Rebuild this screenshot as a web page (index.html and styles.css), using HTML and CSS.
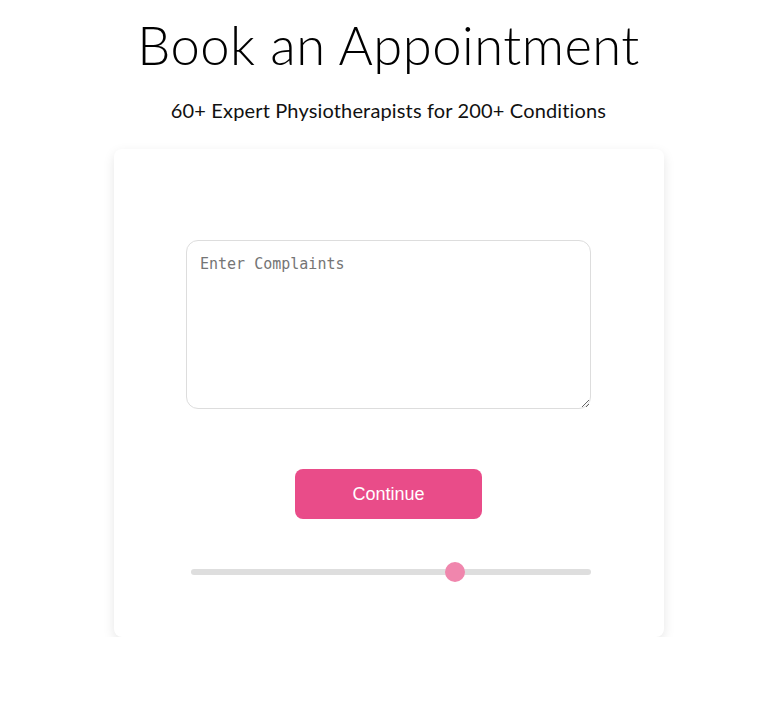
FILE: index.html
```html
<!DOCTYPE html>
<html>
<head>
<meta charset="utf-8">
<link rel="stylesheet" href="styles.css">
</head>
<body>
<div class="page">
  <h1 class="title">Book an Appointment</h1>
  <p class="subtitle">60+ Expert Physiotherapists for 200+ Conditions</p>
  <div class="card">
    <textarea class="complaints" placeholder="Enter Complaints"></textarea>
    <button class="continue">Continue</button>
    <div class="slider">
      <div class="track"></div>
      <div class="thumb" style="left: 66%"></div>
    </div>
  </div>
</div>
</body>
</html>
```

FILE: styles.css
```css
html, body {
  margin: 0;
  padding: 0;
  background: #fff;
}
.page {
  padding-left: 12px;
  display: flex;
  flex-direction: column;
  align-items: center;
  font-family: "Lato", "Liberation Sans", sans-serif;
  color: #000;
}
.title {
  margin: 13px 0 0;
  font-size: 52.5px;
  font-weight: 300;
  line-height: 64px;
  letter-spacing: 0.5px;
}
.subtitle {
  margin: 20px 0 0;
  font-size: 20px;
  font-weight: 400;
  line-height: 26px;
  letter-spacing: 0.15px;
  color: #111;
}
.card {
  margin-top: 26px;
  width: 550px;
  height: 488px;
  box-sizing: border-box;
  background: #fff;
  border-radius: 8px;
  box-shadow: 0 4px 12px rgba(0, 0, 0, 0.1);
  display: flex;
  flex-direction: column;
  align-items: center;
  padding-top: 91px;
}
.complaints {
  width: 405px;
  height: 169px;
  box-sizing: border-box;
  border: 1px solid #ddd;
  border-radius: 12px;
  padding: 13px;
  font-family: "DejaVu Sans Mono", monospace;
  font-size: 15px;
  line-height: 20px;
  resize: vertical;
  outline: none;
}
.complaints::placeholder {
  color: #757575;
}
.continue {
  margin-top: 60px;
  width: 187px;
  height: 50px;
  border: none;
  border-radius: 8px;
  background: #e94c89;
  color: #fff;
  font-family: "Liberation Sans", Arial, sans-serif;
  font-size: 18px;
}
.slider {
  position: relative;
  margin-top: 43px;
  margin-left: 5px;
  width: 400px;
  height: 20px;
}
.track {
  position: absolute;
  left: 0;
  right: 0;
  top: 7px;
  height: 6px;
  border-radius: 3px;
  background: #dedede;
}
.thumb {
  position: absolute;
  top: 0;
  width: 20px;
  height: 20px;
  margin-left: -10px;
  border-radius: 50%;
  background: #f086ad;
}
```
